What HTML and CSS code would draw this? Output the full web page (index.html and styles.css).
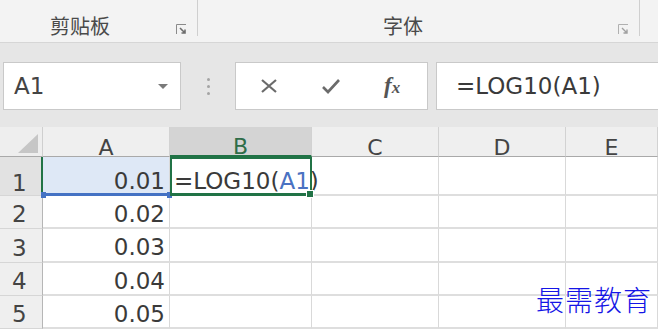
FILE: index.html
```html
<!DOCTYPE html>
<html>
<head>
	<title>LOG10</title>
	<link rel="stylesheet" href="styles.css">
</head>
<body>
	<div class="page">

		<div class="ribbon">
			<div class="group clip">
				<span class="glabel">剪贴板</span>
				<svg class="launch" width="11" height="11" viewBox="0 0 11 11"><path d="M0.5 10V0.5H10" fill="none" stroke="#8a8a8a"/><path d="M4 4L9 9M9 5.5V9H5.5" fill="none" stroke="#6d6d6d" stroke-width="1.6"/></svg>
			</div>
			<div class="group font">
				<span class="glabel">字体</span>
				<svg class="launch" width="11" height="11" viewBox="0 0 11 11"><path d="M0.5 10V0.5H10" fill="none" stroke="#b0b0b0"/><path d="M4 4L9 9M9 5.5V9H5.5" fill="none" stroke="#a0a0a0" stroke-width="1.4"/></svg>
			</div>
		</div>

		<div class="fbar">
			<div class="namebox">
				<span>A1</span>
				<i class="caret"></i>
			</div>
			<div class="dots"><b></b><b></b><b></b></div>
			<div class="btns">
				<svg width="18" height="14" viewBox="0 0 18 14"><path d="M2 1L16 13M16 1L2 13" stroke="#6b6b6b" stroke-width="2.2"/></svg>
				<svg width="20" height="16" viewBox="0 0 20 16"><path d="M2 9L7 14L18 2" fill="none" stroke="#6b6b6b" stroke-width="2.6"/></svg>
				<span class="fx">f<small>x</small></span>
			</div>
			<div class="finput">=LOG10(A1)</div>
		</div>

		<div class="sheet">
			<div class="corner"><i></i></div>
			<div class="ch">A</div>
			<div class="ch on">B</div>
			<div class="ch">C</div>
			<div class="ch">D</div>
			<div class="ch">E</div>

			<div class="rh on r1">1</div>
			<div class="c num ref r1">0.01</div>
			<div class="c act r1">=LOG10(<span class="blue">A1</span>)</div>
			<div class="c r1"></div>
			<div class="c r1"></div>
			<div class="c r1"></div>

			<div class="rh">2</div>
			<div class="c num">0.02</div>
			<div class="c"></div>
			<div class="c"></div>
			<div class="c"></div>
			<div class="c"></div>

			<div class="rh">3</div>
			<div class="c num">0.03</div>
			<div class="c"></div>
			<div class="c"></div>
			<div class="c"></div>
			<div class="c"></div>

			<div class="rh">4</div>
			<div class="c num">0.04</div>
			<div class="c"></div>
			<div class="c"></div>
			<div class="c"></div>
			<div class="c"></div>

			<div class="rh">5</div>
			<div class="c num">0.05</div>
			<div class="c"></div>
			<div class="c"></div>
			<div class="c"></div>
			<div class="c"></div>
		</div>

		<div class="mark">最需教育</div>
	</div>
</body>
</html>
```

FILE: styles.css
```css
body {
	margin: 0;
	overflow: hidden;
	font-family: "DejaVu Sans", "Noto Sans CJK SC", sans-serif;
	color: #3a3a3a;
}

.page {
	position: relative;
	width: 658px;
	height: 329px;
	overflow: hidden;
	background: #e6e6e6;
}

/* ribbon */
.ribbon {
	display: flex;
	height: 42px;
	background: #f3f3f3;
	border-bottom: 1px solid #d6d6d6;
}

.group {
	display: flex;
	align-items: center;
	height: 36px;
	padding-top: 14px;
	box-sizing: border-box;
	border-right: 1px solid #cfcfcf;
	margin-bottom: 6px;
}

.glabel {
	font-family: "Noto Sans CJK SC", sans-serif;
	font-size: 20px;
	color: #4a4a4a;
}

.clip {
	width: 198px;
	padding-left: 50px;
}

.clip .launch {
	margin-left: 66px;
	margin-top: 8px;
}

.font {
	width: 442px;
	padding-left: 185px;
}

.font .launch {
	margin-left: 195px;
	margin-top: 8px;
}

/* formula bar */
.fbar {
	display: flex;
	height: 48px;
	padding: 19px 0 17px 3px;
}

.namebox {
	display: flex;
	align-items: center;
	justify-content: space-between;
	width: 178px;
	box-sizing: border-box;
	padding: 0 12px 0 10px;
	background: #fff;
	border: 1px solid #c9c9c9;
	font-size: 23px;
	color: #444;
}

.caret {
	border-left: 5px solid transparent;
	border-right: 5px solid transparent;
	border-top: 5px solid #7a7a7a;
}

.dots {
	display: flex;
	flex-direction: column;
	justify-content: center;
	align-items: center;
	gap: 4px;
	width: 54px;
}

.dots b {
	width: 3px;
	height: 3px;
	background: #a4a4a4;
	border-radius: 50%;
}

.btns {
	display: flex;
	align-items: center;
	width: 193px;
	box-sizing: border-box;
	padding-left: 24px;
	gap: 43px;
	background: #fff;
	border: 1px solid #c9c9c9;
}

.fx {
	font-family: "Liberation Serif", serif;
	font-style: italic;
	font-weight: bold;
	font-size: 23px;
	color: #555;
}

.fx small {
	font-size: 17px;
}

.finput {
	flex: 1;
	margin-left: 8px;
	padding-left: 19px;
	display: flex;
	align-items: center;
	background: #fff;
	border: 1px solid #c9c9c9;
	border-right: none;
	font-size: 23px;
	color: #3a3a3a;
}

/* sheet */
.sheet {
	display: grid;
	grid-template-columns: 43px 127px 142px 127px 127px 1fr;
	grid-template-rows: 30px 39px 33px 34px 33px 33px;
	background: #fff;
}

.corner {
	background: #eeeeee;
	border-right: 1px solid #cfcfcf;
	border-bottom: 1px solid #a9a9a9;
	position: relative;
}

.corner i {
	position: absolute;
	right: 4px;
	bottom: 3px;
	border-left: 20px solid transparent;
	border-bottom: 19px solid #c6c6c6;
}

.ch {
	display: flex;
	justify-content: center;
	align-items: flex-end;
	background: #efefef;
	border-right: 1px solid #d2d2d2;
	border-bottom: 1px solid #a9a9a9;
	font-size: 22px;
	line-height: 16px;
	color: #444;
}

.ch.on {
	background: #d4d4d4;
	border-bottom: 2px solid #217346;
	color: #2f6d48;
}

.rh {
	display: flex;
	align-items: center;
	padding: 4px 0 0 12px;
	background: #efefef;
	border-right: 1px solid #b6b6b6;
	border-bottom: 1px solid #d6d6d6;
	font-size: 23px;
	color: #444;
}

.rh.on {
	background: #e2e2e2;
	border-right: 2px solid #217346;
}

.c {
	display: flex;
	align-items: center;
	padding: 4px 4px 0;
	border-right: 1px solid #d9d9d9;
	border-bottom: 2px solid #dedede;
	font-size: 23px;
	white-space: nowrap;
	color: #3a3a3a;
}

.r1 {
	align-items: flex-end;
	line-height: 1;
	padding-top: 0;
}

.num {
	justify-content: flex-end;
}

.ref {
	background: #dee8f6;
	border-bottom: 3px solid #4472c4;
	position: relative;
}

.ref::before,
.ref::after {
	content: "";
	position: absolute;
	bottom: -5px;
	width: 5px;
	height: 6px;
	background: #4472c4;
}

.ref::before {
	left: -2px;
}

.ref::after {
	right: -3px;
}

.act {
	border: 2px solid #217346;
	border-bottom-width: 3px;
	position: relative;
	z-index: 1;
	padding-left: 2px;
}

.act::after {
	content: "";
	position: absolute;
	right: -4px;
	bottom: -5px;
	width: 6px;
	height: 6px;
	background: #217346;
	border: 1px solid #fff;
}

.blue {
	color: #4a72c2;
}

/* watermark */
.mark {
	position: absolute;
	left: 536px;
	top: 279px;
	font-family: "Noto Sans CJK SC", serif;
	font-weight: 300;
	font-size: 28px;
	color: #1515e6;
	letter-spacing: 1px;
}
```
